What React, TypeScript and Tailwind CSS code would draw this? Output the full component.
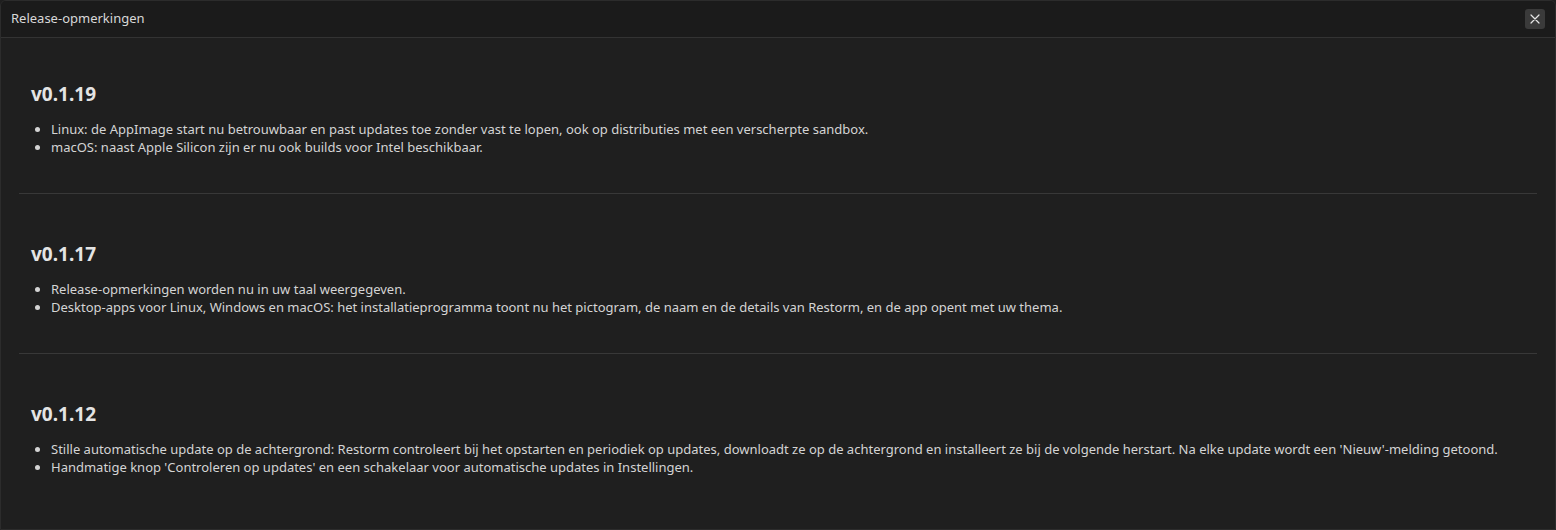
import React from "react";

const releases = [
  {
    v: "v0.1.19",
    items: [
      "Linux: de AppImage start nu betrouwbaar en past updates toe zonder vast te lopen, ook op distributies met een verscherpte sandbox.",
      "macOS: naast Apple Silicon zijn er nu ook builds voor Intel beschikbaar.",
    ],
  },
  {
    v: "v0.1.17",
    items: [
      "Release-opmerkingen worden nu in uw taal weergegeven.",
      "Desktop-apps voor Linux, Windows en macOS: het installatieprogramma toont nu het pictogram, de naam en de details van Restorm, en de app opent met uw thema.",
    ],
  },
  {
    v: "v0.1.12",
    items: [
      "Stille automatische update op de achtergrond: Restorm controleert bij het opstarten en periodiek op updates, downloadt ze op de achtergrond en installeert ze bij de volgende herstart. Na elke update wordt een 'Nieuw'-melding getoond.",
      "Handmatige knop 'Controleren op updates' en een schakelaar voor automatische updates in Instellingen.",
    ],
  },
];

export default function App() {
  return (
    <div
      className="w-[1556px] h-[530px] bg-[#1f1f1f] text-[#d6d6d6] overflow-hidden"
      style={{ fontFamily: '"Noto Sans", "Open Sans", sans-serif' }}
    >
      <div className="h-full flex flex-col border border-[#2c2c2c] rounded-t-[6px] overflow-hidden">
        <div className="h-[37px] shrink-0 flex items-center justify-between pl-[10px] pr-[10px] bg-[#1b1b1b] border-b border-[#333333]">
          <span className="text-[13px] text-[#d8d8d8]">Release-opmerkingen</span>
          <button className="w-[20px] h-[20px] rounded-[3px] bg-[#3a3a3a] flex items-center justify-center text-[#e6e6e6]">
            <svg width="12" height="12" viewBox="0 0 12 12" fill="none" stroke="currentColor" strokeWidth="1.2" strokeLinecap="round">
              <path d="M2 2 L10 10 M10 2 L2 10" />
            </svg>
          </button>
        </div>
        <div className="flex-1 px-[18px]">
          {releases.map((r, i) => (
            <div
              key={r.v}
              className={
                (i === 0 ? "pt-[42px] " : "pt-[46px] border-t border-[#383838] ") +
                "pb-[37px] px-3"
              }
            >
              <h2 className="text-[19px] leading-[28px] font-bold text-[#e4e4e4] mb-[12px]">{r.v}</h2>
              <ul className="list-disc pl-[20px] text-[13px] leading-[18px] text-[#d4d4d4]">
                {r.items.map((t) => (
                  <li key={t}>{t}</li>
                ))}
              </ul>
            </div>
          ))}
        </div>
      </div>
    </div>
  );
}
